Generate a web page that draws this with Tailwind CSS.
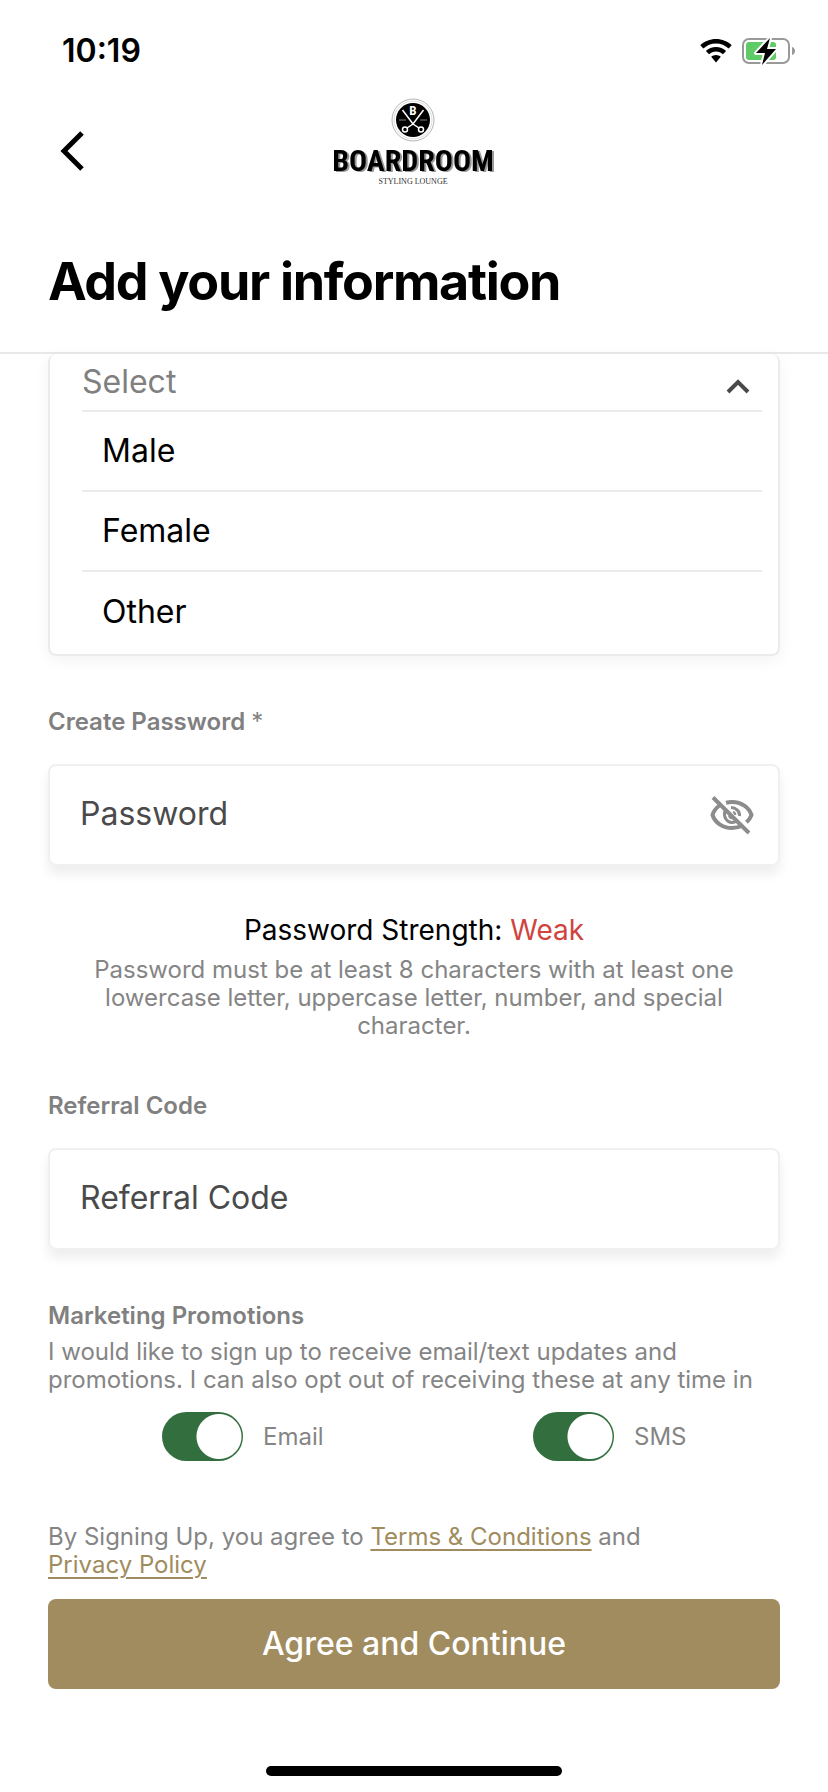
<!DOCTYPE html>
<html lang="en">
<head>
<meta charset="utf-8">
<meta name="viewport" content="width=device-width, initial-scale=1">
<title>Add your information</title>
<script src="https://cdn.jsdelivr.net/npm/@tailwindcss/browser@4"></script>
</head>
<body class="min-h-screen bg-white font-['Inter',sans-serif] text-black">
<div class="flex min-h-screen flex-col">
  <div class="flex h-[98px] items-center justify-between pt-1 pr-8 pl-[62px]">
    <time class="text-[32px] leading-10 font-semibold">10:19</time>
    <div class="flex items-center gap-[10px]">
      <svg class="h-6 w-8" viewBox="0 0 32 24" aria-label="Wi-Fi">
        <path d="M16 0C10 0 4.400 2.300.3 6.200L3.400 9.400C6.700 6.300 11.100 4.400 16 4.400S25.300 6.300 28.600 9.400L31.700 6.200C27.600 2.300 22 0 16 0Z"/>
        <path d="M16 8C12.100 8 8.600 9.500 5.900 12L9 15.200C10.800 13.500 13.300 12.400 16 12.400S21.200 13.500 23 15.200L26.100 12C23.400 9.500 19.900 8 16 8Z"/>
        <path d="M16 16C14.100 16 12.500 16.700 11.200 17.800L16 23.500L20.800 17.800C19.500 16.700 17.900 16 16 16Z"/>
      </svg>
      <svg class="h-[30px] w-[54px]" viewBox="0 0 54 30" aria-label="Battery charging">
        <rect x="1" y="3" width="46" height="24" rx="6" fill="none" stroke="#999" stroke-width="2"/>
        <path d="M50 11c4 1 4 7 0 8z" fill="#999"/>
        <rect x="4" y="6" width="30" height="18" rx="3" fill="#5fcb66"/>
        <path d="M28 2L14 17h9l-3 12L34 13h-9z" fill="#000" stroke="#fff" stroke-width="4" paint-order="stroke" stroke-linejoin="round"/>
      </svg>
    </div>
  </div>

  <header class="border-b-2 border-[#e8e8e8] pb-[38px]">
    <div class="grid h-[106px] grid-cols-[1fr_auto_1fr] items-center px-12">
      <button type="button" aria-label="Back" class="flex h-12 w-12 items-center justify-center">
        <svg class="h-10 w-6" viewBox="0 0 24 40" fill="none" stroke="#000" stroke-width="5"><path d="M22 2L4 20l18 18"/></svg>
      </button>
      <svg class="h-[92px] w-[170px] self-start" viewBox="0 0 170 92" role="img" aria-label="Boardroom Styling Lounge">
        <circle cx="84" cy="22" r="21" fill="none" stroke="#b5b5b5" stroke-width="1"/>
        <circle cx="84" cy="22" r="19" fill="none" stroke="#ddd" stroke-width="1"/>
        <circle cx="84" cy="22" r="17" fill="#000"/>
        <g stroke="#fff" fill="none" stroke-width="1.500">
          <path d="M73.500 12L84 26L90 30M94.500 12L84 26L78 30"/>
          <circle cx="76" cy="31.500" r="2.500"/><circle cx="92" cy="31.500" r="2.500"/>
          <path d="M70 22h7M91 22h7" stroke="#555"/>
        </g>
        <text x="84" y="17" text-anchor="middle" fill="#fff" font-family="Roboto Condensed, Liberation Sans Narrow, sans-serif" font-weight="700" font-size="13">B</text>
        <text class="drop-shadow-[2px_1px_0_#999]" x="84" y="73" text-anchor="middle" font-family="Liberation Sans Narrow, Roboto Condensed, DejaVu Sans Condensed, sans-serif" font-weight="700" font-size="30">BOARDROOM</text>
        <text x="84" y="86" text-anchor="middle" fill="#333" font-family="Liberation Serif, serif" font-size="8">STYLING LOUNGE</text>
      </svg>
    </div>
    <h1 class="mt-[46px] pl-12 text-[52px] leading-[64px] font-bold tracking-tight">Add your information</h1>
  </header>

  <main class="px-12">
    <form>
      <section class="rounded-lg border-2 border-t-0 border-[#ebebeb] pr-4 pb-[2px] pl-8 shadow-[0_4px_16px_rgba(0,0,0,0.05)]">
        <div class="flex h-[58px] items-center border-b-2 border-[#ebebeb]">
          <select aria-label="Gender" class="flex-1 appearance-none bg-transparent text-[32px] leading-10 text-[#808080]"><option>Select</option></select>
          <svg class="mt-2 mr-3 h-4 w-6" viewBox="0 0 24 16" fill="none" stroke="#4a4a4a" stroke-width="4"><path d="M2 14L12 4l10 10"/></svg>
        </div>
        <ul role="listbox" aria-label="Gender options" class="divide-y-2 divide-[#ebebeb] text-[32px] leading-10">
          <li role="option" class="flex h-20 items-center pl-5">Male</li>
          <li role="option" class="flex h-20 items-center pl-5">Female</li>
          <li role="option" class="flex h-20 items-center pl-5">Other</li>
        </ul>
      </section>

      <label for="password" class="mt-[52px] block text-2xl leading-7 font-semibold text-[#808080]">Create Password <span class="font-normal">*</span></label>
      <div class="mt-7 flex h-[102px] items-center rounded-lg border-2 border-[#f0f0f0] pr-6 pl-[30px] shadow-[0_8px_12px_rgba(0,0,0,0.07)]">
        <input id="password" type="password" placeholder="Password" class="h-full min-w-0 flex-1 pb-1 text-[32px] outline-none placeholder:text-[#4a4a4a]">
        <button type="button" aria-label="Show password">
          <svg class="h-10 w-11" viewBox="0 0 44 40" fill="none" stroke="#8c8c8c" stroke-width="4">
            <path d="M10 10C6 13 3.500 16.500 2.500 20C5 27.500 12.500 33 22 33C26 33 29.500 32 32.500 30.500"/>
            <path d="M16 7.700C18 7.200 20 7 22 7C31.500 7 39 12.500 41.500 20C40.500 22.700 39 25 36.500 27.200"/>
            <path d="M15 16C13 22 17 27.500 22 27.500C23.500 27.500 24.500 27.200 25.500 26.700M21 12.600C26 12.600 30 16.500 29.500 21" stroke-width="3"/>
            <path d="M23 17C24.500 17.500 25.300 18.500 25.300 20M19 20.500C19.500 22.500 20.500 23.300 22 23.300" stroke-width="2"/>
            <path d="M3 2.500L39 38"/>
          </svg>
        </button>
      </div>

      <div class="mt-[46px] text-center">
        <p class="text-[28px] leading-9">Password Strength: <span class="text-[#d0443e]">Weak</span></p>
        <p class="mt-2 text-2xl leading-7 text-[#858585]">Password must be at least 8 characters with at least one<br>lowercase letter, uppercase letter, number, and special<br>character.</p>
      </div>

      <label for="referral" class="mt-[52px] block text-2xl leading-7 font-semibold text-[#808080]">Referral Code</label>
      <div class="mt-7 flex h-[102px] items-center rounded-lg border-2 border-[#f0f0f0] pr-6 pl-[30px] shadow-[0_8px_12px_rgba(0,0,0,0.07)]">
        <input id="referral" type="text" placeholder="Referral Code" class="h-full min-w-0 flex-1 pb-1 text-[32px] outline-none placeholder:text-[#4a4a4a]">
      </div>

      <h2 class="mt-[52px] text-2xl leading-7 font-semibold text-[#808080]">Marketing Promotions</h2>
      <p class="mt-2 text-2xl leading-7 text-[#858585]">I would like to sign up to receive email/text updates and<br>promotions. I can also opt out of receiving these at any time in</p>
      <div class="mt-[18px] grid grid-cols-2 text-2xl leading-7 text-[#858585]">
        <label class="flex items-center gap-5 pl-[114px]">
          <input type="checkbox" role="switch" checked class="h-[49px] w-[81px] appearance-none rounded-full bg-[#336f3e] bg-[radial-gradient(circle_at_57px_50%,white_22px,transparent_23px)]">Email
        </label>
        <label class="flex items-center gap-5 pl-[119px]">
          <input type="checkbox" role="switch" checked class="h-[49px] w-[81px] appearance-none rounded-full bg-[#336f3e] bg-[radial-gradient(circle_at_57px_50%,white_22px,transparent_23px)]">SMS
        </label>
      </div>

      <p class="mt-[62px] text-2xl leading-7 text-[#858585]">By Signing Up, you agree to <a href="#" class="text-[#a08c5e] underline decoration-2 underline-offset-4">Terms &amp; Conditions</a> and<br><a href="#" class="text-[#a08c5e] underline decoration-2 underline-offset-4">Privacy Policy</a></p>
      <button type="submit" class="mt-5 h-[90px] w-full rounded-lg bg-[#a08c5e] text-[32px] leading-10 font-medium text-white">Agree and Continue</button>
    </form>
  </main>
  <div class="mx-auto mt-auto mb-4 h-[10px] w-[296px] rounded-full bg-black"></div>
</div>
</body>
</html>
